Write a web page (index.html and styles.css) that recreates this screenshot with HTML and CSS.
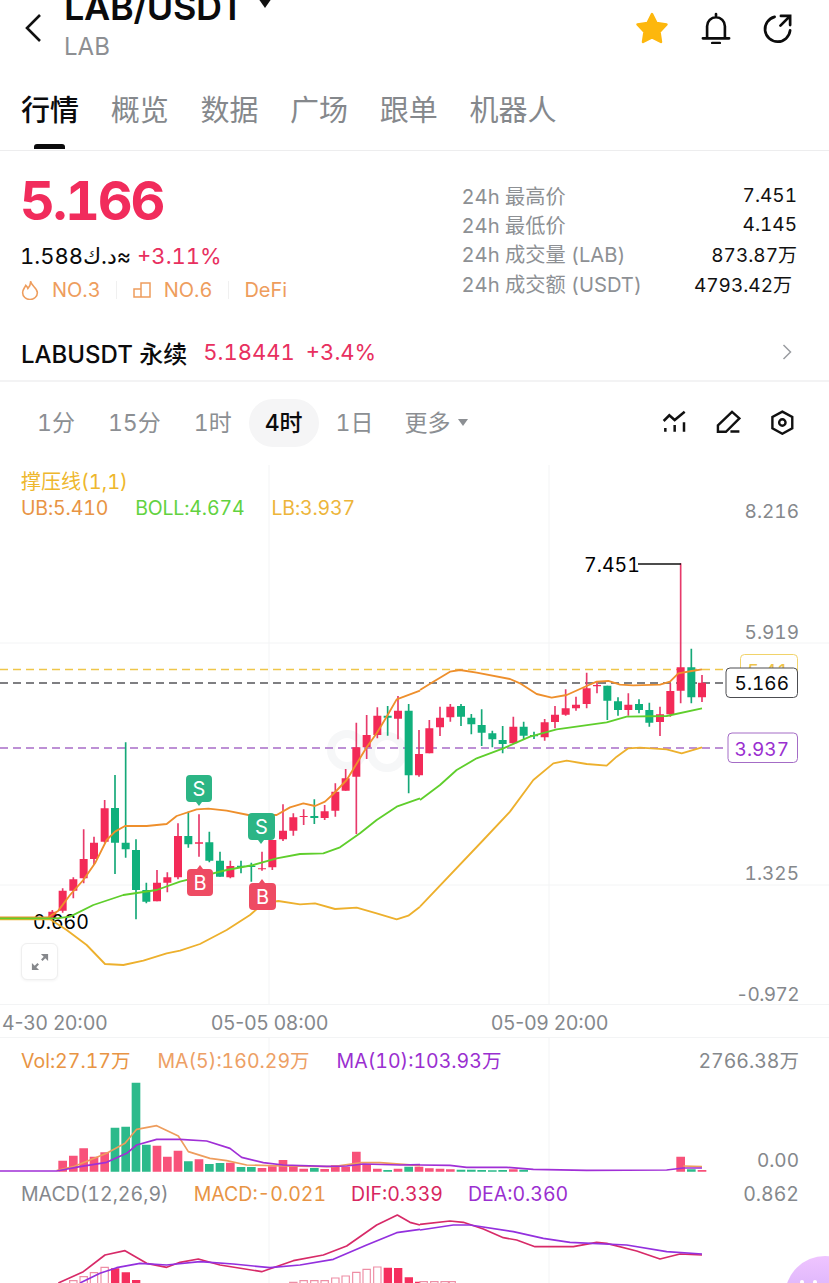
FILE: index.html
```html
<!DOCTYPE html>
<html lang="zh">
<head>
<meta charset="utf-8">
<title>LAB/USDT</title>
<link rel="stylesheet" href="styles.css">
</head>
<body>
<div class="page">
  <header class="header">
    <svg class="back" viewBox="0 0 20 32"><path d="M17 3 4 16l13 13"/></svg>
    <div class="pair">
      <div class="pair-name">LAB/USDT<span class="pair-caret"></span></div>
      <div class="pair-sub">LAB</div>
    </div>
    <div class="header-icons">
      <svg class="ic-star" viewBox="0 0 34 32"><path d="M17 2 21.5 11 31.5 12.5 24.5 20 26 30 17 25.5 8 30 9.5 20 2.5 12.5 12.5 11z"/></svg>
      <svg class="ic-line ic-bell" viewBox="0 0 32 34"><path d="M6.5 28V15a9.500 9.500 0 0 1 19 0v13M2 28h28M12 33h8M16 2v3.500"/></svg>
      <svg class="ic-line ic-share" viewBox="0 0 32 32"><path d="M12 4a13 13 0 1 0 16 14M18 13l9-9M18.500 3H28v9.500"/></svg>
    </div>
  </header>

  <nav class="tabs">
    <span class="tab tab-active">行情</span>
    <span class="tab">概览</span>
    <span class="tab">数据</span>
    <span class="tab">广场</span>
    <span class="tab">跟单</span>
    <span class="tab">机器人</span>
  </nav>

  <section class="summary">
    <div class="summary-left">
      <div class="price">5.166</div>
      <div class="fiat-row">
        <span class="fiat" dir="rtl">≈د.ك1.588</span>
        <span class="up">+3.11%</span>
      </div>
      <div class="tags">
        <span class="tag"><svg class="tag-ic tag-flame" viewBox="0 0 16 19"><path d="M8.500 1c.5 4.500 6.500 6.500 6.500 11a7 6.500 0 0 1-14 0c0-3 2-4.500 3-7 1 .8 1.600 1.800 2 3 1.800-2 2.800-4.500 2.500-7z"/></svg>NO.3</span>
        <i class="tag-sep"></i>
        <span class="tag"><svg class="tag-ic tag-build" viewBox="0 0 18 16"><path d="M1 7h7v8H1zM8 15V1h9v14z"/></svg>NO.6</span>
        <i class="tag-sep"></i>
        <span class="tag">DeFi</span>
      </div>
    </div>
    <dl class="stats">
      <div class="stat"><dt>24h 最高价</dt><dd>7.451</dd></div>
      <div class="stat"><dt>24h 最低价</dt><dd>4.145</dd></div>
      <div class="stat"><dt>24h 成交量 (LAB)</dt><dd>873.87万</dd></div>
      <div class="stat stat-last"><dt>24h 成交额 (USDT)</dt><dd>4793.42万</dd></div>
    </dl>
  </section>

  <section class="perp">
    <span class="perp-name">LABUSDT 永续</span>
    <span class="up perp-price">5.18441</span>
    <span class="up perp-change">+3.4%</span>
    <svg class="perp-chev" viewBox="0 0 10 18"><path d="M1.500 2 8.500 9l-7 7"/></svg>
  </section>

  <section class="timebar">
    <span class="time">1分</span>
    <span class="time">15分</span>
    <span class="time">1时</span>
    <span class="time time-active">4时</span>
    <span class="time">1日</span>
    <span class="time time-more">更多<i class="more-caret"></i></span>
    <div class="tools">
      <svg class="tool" viewBox="30 43 75 75"><path d="M35 76 52 59 68 73 98 48M40 97v11M68 88v20M96 80v28"/></svg>
      <svg class="tool" viewBox="195 40 78 78"><path d="M201 88 245 46 268 66 226 108H201zM240 107h28"/></svg>
      <svg class="tool" viewBox="358 41 75 78"><path d="M395 46 426 63V98L395 115 364 98V63z"/><circle cx="395" cy="80" r="10"/></svg>
    </div>
  </section>

  <section class="pane pane-main">
    <svg class="canvas" viewBox="0 465 829 540">
      <path class="grid" d="M269 465V1005M549 465V1005M0 643H829M0 885H829M0 1004.500H829"/>
      <g class="watermark"><circle cx="347" cy="750" r="16"/><circle cx="387" cy="752" r="16"/></g>
      <path class="dash dash-gold" d="M0 669.500H726"/>
      <path class="dash dash-dark" d="M0 683H726"/>
      <path class="dash dash-purple" d="M0 748H728"/>

      <g transform="translate(0 690) scale(.33333)">
        <path class="wick-r" d="M157 660V690M188 595V668M220 562V625M251 418V580M282 440V525M314 330V458M471 540V634M502 547V607M534 400V568M597 373V500M691 512V565M786 485V542M817 450V540M849 343V453M880 370V437M911 358V405M974 345V390M1006 280V380M1037 237V302M1069 98V432M1100 75V207M1132 52V145M1194 18V148M1257 120V260"/>
        <path class="wick-g" d="M345 255V552M377 157V503M408 448V688M439 578V640M565 365V473M628 425V517M660 485V560M723 512V550M754 518V575M943 328V402M1163 48V137M1226 42V310"/>
        <path class="body-r" d="M145 665h24v20h-24zM176 602h24v60h-24zM208 568h24v34h-24zM239 507h24v58h-24zM270 458h24v49h-24zM302 355h24v100h-24zM459 578h24v56h-24zM490 562h24v16h-24zM522 438h24v124h-24zM585 457h24v4h-24zM679 528h24v34h-24zM774 535h24v3h-24zM805 450h24v82h-24zM837 422h24v26h-24zM868 382h24v40h-24zM899 378h24v3h-24zM962 364h24v20h-24zM994 305h24v57h-24zM1025 265h24v37h-24zM1057 172h24v88h-24zM1088 135h24v37h-24zM1120 77h24v58h-24zM1182 62h24v24h-24zM1245 192h24v64h-24z"/>
        <path class="body-g" d="M333 354h24v104h-24zM365 458h24v20h-24zM396 480h24v120h-24zM427 600h24v35h-24zM553 438h24v25h-24zM616 457h24v55h-24zM648 512h24v48h-24zM711 527h24v4h-24zM742 527h24v4h-24zM931 378h24v6h-24zM1151 77h24v6h-24zM1214 62h24v194h-24z"/>
      </g>
      <g transform="translate(420 540) scale(.33333)">
        <path class="wick-r" d="M28 540V640M60 500V588M91 492V545M280 530V612M374 537V602M405 498V565M437 448V527M468 470V512M500 398V505M531 425V460M625 460V527M720 500V588M751 430V530M782 70V490M846 405V486"/>
        <path class="wick-g" d="M123 492V558M154 522V583M185 508V618M217 572V622M248 558V640M311 545V597M342 575V597M562 437V540M594 472V527M657 478V520M688 488V560M814 326V490"/>
        <path class="body-r" d="M16 565h24v75h-24zM48 533h24v29h-24zM79 500h24v32h-24zM268 560h24v50h-24zM362 547h24v45h-24zM393 524h24v22h-24zM425 505h24v19h-24zM456 494h24v11h-24zM488 445h24v47h-24zM519 435h24v4h-24zM613 494h24v16h-24zM708 523h24v23h-24zM739 453h24v70h-24zM770 382h24v70h-24zM834 428h24v44h-24z"/>
        <path class="body-g" d="M111 498h24v32h-24zM142 533h24v20h-24zM173 555h24v23h-24zM205 580h24v18h-24zM236 600h24v12h-24zM299 560h24v27h-24zM330 585h24v4h-24zM550 437h24v45h-24zM582 484h24v26h-24zM645 492h24v18h-24zM676 510h24v38h-24zM802 382h24v90h-24z"/>
      </g>

      <text class="mark-price" x="33" y="929">0.660</text>

      <g transform="translate(0 690) scale(.33333)">
        <path class="band band-low" d="M0 688H150L200 720 260 765 315 822 370 825 430 812 500 790 540 782 600 762 680 720 750 675 790 640 835 633 900 643 945 640 1005 657 1070 653 1130 670 1190 688 1225 677 1260 650"/>
        <path class="band band-up" d="M0 682H145L175 662 210 615 250 570 285 520 320 450 345 425 375 408 440 408 500 402 530 378 590 358 625 356 680 362 745 375 830 375 870 352 910 340 945 348 975 335 1000 312 1040 270 1100 172 1130 130 1160 80 1190 28 1260 2"/>
        <path class="band band-mid" d="M0 685H170L210 680 280 645 370 615 470 600 540 575 600 560 680 540 760 525 830 505 900 492 970 490 1020 472 1080 430 1130 390 1190 350 1260 325"/>
      </g>
      <g transform="translate(420 540) scale(.33333)">
        <path class="band band-low" d="M0 1100 190 900 270 815 340 720 400 670 440 662 500 672 560 677 590 650 625 625 660 623 740 628 785 640 846 622"/>
        <path class="band band-mid" d="M0 780 60 735 110 690 170 655 250 625 330 590 410 568 560 547 620 530 740 528 846 505"/>
        <path class="band band-up" d="M0 450 40 425 90 395 120 390 170 398 270 417 300 430 350 462 395 473 440 465 500 438 530 425 565 423 600 434 640 436 720 434 750 425 775 400 815 393 846 388"/>
      </g>

      <path class="leader" d="M638 564H681"/>
      <text class="mark-price" x="584" y="572">7.451</text>

      <g class="signal-s" transform="translate(186 775)">
        <path d="M4 0h18a4 4 0 0 1 4 4v19a4 4 0 0 1-4 4h-6l-3 4-3-4H4a4 4 0 0 1-4-4V4a4 4 0 0 1 4-4z"/>
        <text x="13" y="21">S</text>
      </g>
      <g class="signal-s" transform="translate(248 813)">
        <path d="M4 0h19a4 4 0 0 1 4 4v19a4 4 0 0 1-4 4h-7l-3 4-3-4H4a4 4 0 0 1-4-4V4a4 4 0 0 1 4-4z"/>
        <text x="13.500" y="21">S</text>
      </g>
      <g class="signal-b" transform="translate(187 866)">
        <path d="M4 3h6l3-4 3 4h6a4 4 0 0 1 4 4v19a4 4 0 0 1-4 4H4a4 4 0 0 1-4-4V7a4 4 0 0 1 4-4z"/>
        <text x="13" y="24">B</text>
      </g>
      <g class="signal-b" transform="translate(249 880)">
        <path d="M4 3h6l3-4 3 4h7a4 4 0 0 1 4 4v19a4 4 0 0 1-4 4H4a4 4 0 0 1-4-4V7a4 4 0 0 1 4-4z"/>
        <text x="13.500" y="24">B</text>
      </g>

      <text class="axis" x="799" y="517.500">8.216</text>
      <text class="axis" x="799" y="638.500">5.919</text>
      <text class="axis" x="799" y="880">1.325</text>
      <text class="axis axis-neg" x="799" y="1000.500">-0.972</text>

      <rect class="tag-gold" x="740.500" y="654.500" width="57" height="30" rx="4"/>
      <text class="tag-gold-text" x="789" y="678">5.41</text>
      <rect class="tag-dark" x="726" y="668" width="71.500" height="29.500" rx="4"/>
      <text class="tag-dark-text" x="789" y="690">5.166</text>
      <rect class="tag-purple" x="728" y="733" width="69.500" height="29.500" rx="4"/>
      <text class="tag-purple-text" x="789" y="755.500">3.937</text>
    </svg>

    <div class="main-legend">
      <div class="legend-title">撑压线(1,1)</div>
      <div class="legend legend-boll">
        <span class="c-orange">UB:5.410</span>
        <span class="c-green">BOLL:4.674</span>
        <span class="c-gold">LB:3.937</span>
      </div>
    </div>
    <button class="expand" type="button" aria-label="expand">
      <svg viewBox="0 0 20 20"><path d="M2 18 8 12M18 2 12 8"/><path class="expand-head" d="M1 11v8h8zM19 9V1h-8z"/></svg>
    </button>
  </section>

  <div class="dates">
    <span>4-30 20:00</span>
    <span>05-05 08:00</span>
    <span>05-09 20:00</span>
  </div>

  <section class="pane pane-vol">
    <svg class="canvas" viewBox="0 1037 829 138">
      <path class="grid" d="M269 1037V1175M549 1037V1175M0 1037.500H829"/>
      <g transform="translate(0 1040) scale(.33333)">
        <path class="vol-r" d="M175 362h26v33h-26zM207 347h26v48h-26zM238 325h26v70h-26zM269 350h26v45h-26zM301 337h26v58h-26zM458 317h26v78h-26zM489 350h26v45h-26zM521 332h26v63h-26zM584 358h26v37h-26zM678 368h26v27h-26zM773 384h26v11h-26zM804 379h26v16h-26zM836 360h26v35h-26zM867 376h26v19h-26zM898 386h26v9h-26zM961 387h26v8h-26zM993 376h26v19h-26zM1024 380h26v15h-26zM1056 335h26v60h-26zM1087 372h26v23h-26zM1119 386h26v9h-26zM1181 386h26v9h-26zM1244 380h26v15h-26z"/>
        <path class="vol-g" d="M332 263h26v132h-26zM364 260h26v135h-26zM395 128h26v267h-26zM426 314h26v81h-26zM552 364h26v31h-26zM615 372h26v23h-26zM647 369h26v26h-26zM710 381h26v14h-26zM741 381h26v14h-26zM930 384h26v11h-26zM1150 390h26v5h-26zM1213 380h26v15h-26z"/>
        <path class="line-ma5" d="M170 392 220 380 270 360 320 340 375 310 410 268 470 257 535 288 565 335 630 355 680 362 740 375 850 378 1000 380 1085 368 1140 368 1260 377"/>
        <path class="line-ma10" d="M0 393H170L240 380 320 367 380 340 410 315 470 298 540 298 620 303 690 325 725 352 790 368 850 375 980 379 1040 378 1090 372 1200 375 1260 374"/>
      </g>
      <g transform="translate(420 1040) scale(.33333)">
        <path class="vol-r" d="M15 385h26v10h-26zM47 386h26v9h-26zM78 388h26v7h-26zM267 388h26v7h-26zM769 350h26v45h-26zM833 390h26v5h-26z"/>
        <path class="vol-g" d="M110 389h26v6h-26zM141 389h26v6h-26zM172 390h26v5h-26zM204 391h26v4h-26zM235 390h26v5h-26zM298 389h26v6h-26zM801 388h26v7h-26z"/>
        <path class="line-ma5" d="M790 378 846 380"/>
        <path class="line-ma10" d="M0 375 90 376 140 382 260 382 340 388 500 391 740 390 790 384 846 384"/>
      </g>
      <text class="axis" x="799" y="1167">0.00</text>
    </svg>
    <div class="legend legend-vol">
      <span class="c-orange">Vol:27.17万</span>
      <span class="c-peach">MA(5):160.29万</span>
      <span class="c-purple">MA(10):103.93万</span>
      <span class="legend-end">2766.38万</span>
    </div>
  </section>

  <section class="pane pane-macd">
    <svg class="canvas" viewBox="0 1175 829 108">
      <path class="grid" d="M269 1175V1283M549 1175V1283"/>
      <g transform="translate(0 1040) scale(.33333)">
        <path class="hist-hollow" d="M209 722h22v30h-22zM240 710h22v40h-22zM271 698h22v50h-22zM303 682h22v70h-22zM869 727h22v30h-22zM900 722h22v30h-22zM932 722h22v30h-22zM963 722h22v30h-22zM995 714h22v40h-22zM1026 708h22v40h-22zM1058 697h22v50h-22zM1089 688h22v60h-22zM1121 681h22v70h-22z"/>
        <path class="hist-solid" d="M333 685h25v60h-25zM365 697h25v50h-25zM396 720h25v30h-25zM1151 683h25v60h-25zM1182 684h25v60h-25zM1214 712h25v40h-25zM1245 725h25v30h-25z"/>
        <path class="line-dif" d="M175 729 250 695 315 645 375 632 440 670 500 682 540 667 595 657 660 675 785 695 880 662 970 645 1040 618 1130 555 1192 525 1230 547 1260 555"/>
        <path class="line-dea" d="M240 729 300 700 350 683 420 670 500 675 600 665 700 672 810 683 900 675 1000 658 1100 615 1190 578 1260 568"/>
      </g>
      <g transform="translate(420 1040) scale(.33333)">
        <path class="hist-hollow" d="M0 725h22v30H0zM32 725h22v30H32zM63 725h22v30H63zM88 725h18v30H88z"/>
        <path class="line-dif" d="M0 553 90 543 130 547 190 567 250 593 290 600 345 620 460 620 530 607 560 610 650 633 720 657 780 642 846 645"/>
        <path class="line-dea" d="M0 570 100 555 150 555 280 575 370 595 450 607 620 615 740 635 846 642"/>
      </g>
    </svg>
    <div class="legend legend-macd">
      <span class="c-grey">MACD(12,26,9)</span>
      <span class="c-orange">MACD:-0.021</span>
      <span class="c-crimson">DIF:0.339</span>
      <span class="c-purple">DEA:0.360</span>
      <span class="legend-end">0.862</span>
    </div>
    <div class="bubble"><i></i><i></i></div>
  </section>
</div>
</body>
</html>
```
FILE: styles.css
```css
* { box-sizing: border-box; }
html, body { margin: 0; padding: 0; background: #fff; }
body {
  width: 829px;
  height: 1283px;
  overflow: hidden;
  font-family: Inter, "Noto Sans CJK SC", sans-serif;
  font-variant-numeric: tabular-nums;
  color: #0b0b0c;
}
.page { width: 829px; height: 1283px; overflow: hidden; position: relative; }

/* header */
.header { display: flex; height: 90px; padding-left: 23px; position: relative; }
.back { width: 20px; height: 32px; margin-top: 12px; fill: none; stroke: #111; stroke-width: 2.600; }
.pair { margin-left: 21px; margin-top: -18px; }
.pair-name { font-size: 36px; line-height: 50px; font-weight: 600; letter-spacing: -.3px; display: flex; align-items: center; }
.pair-caret {
  width: 0; height: 0; margin-left: 14px; margin-top: -8px;
  border-left: 7px solid transparent; border-right: 7px solid transparent; border-top: 10px solid #111;
}
.pair-sub { font-size: 24px; line-height: 30px; margin-top: 0; color: #8d8f93; }
.header-icons { margin-left: auto; display: flex; align-items: flex-start; padding-right: 35px; }
.ic-star { width: 34px; height: 32px; margin-top: 12px; fill: #fdb70d; stroke: #fdb70d; stroke-width: 2.500; stroke-linejoin: round; }
.ic-line { fill: none; stroke: #0c0c0c; stroke-width: 2.800; stroke-linecap: round; }
.ic-bell { width: 30px; height: 32px; margin-top: 12px; margin-left: 32px; }
.ic-share { width: 31px; height: 31px; margin-top: 13px; margin-left: 32px; }

/* tabs */
.tabs { display: flex; gap: 31.700px; height: 61px; padding: 1px 0 0 21px; border-bottom: 1px solid #ededee; align-items: flex-start; }
.tab { font-size: 29px; line-height: 40px; color: #85888c; position: relative; }
.tab-active { color: #0b0b0c; font-weight: 500; }
.tab-active::after {
  content: ""; position: absolute; left: 13px; top: 53px; width: 31px; height: 5px; border-radius: 3px 3px 0 0; background: #0b0b0c;
}

/* summary */
.summary { display: flex; justify-content: space-between; height: 179px; padding-left: 20px; padding-right: 32px; }
.summary-left { display: flex; flex-direction: column; }
.price { font-size: 54px; line-height: 60px; margin-top: 20px; font-weight: 700; color: #f12c5c; letter-spacing: -2.200px; }
.fiat-row { display: flex; gap: 6px; margin-top: 11px; font-size: 22px; line-height: 28px; }
.fiat { display: inline-block; font-family: Inter, "DejaVu Sans", sans-serif; }
.up { color: #e8305f; }
.tags { display: flex; align-items: center; gap: 15.500px; margin-top: 6px; margin-left: 1px; font-size: 20px; line-height: 28px; color: #ee9d5d; }
.tag { display: flex; align-items: center; gap: 13px; }
.tag-ic { fill: none; stroke: #ee9d5d; stroke-width: 1.500; }
.tag-flame { width: 18px; height: 20px; }
.tag-build { width: 18px; height: 16px; }
.tag-sep { width: 1px; height: 18px; background: #f0f0f0; }
.stats { margin: 29.500px 0 0; width: 335.500px; }
.stat { display: flex; justify-content: space-between; height: 29.400px; align-items: center; font-size: 20.200px; }
.stat dt { color: #8d9094; }
.stat dd { margin: 0; color: #111; font-size: 19px; }
.stat-last { padding-right: 5px; }

.perp { display: flex; align-items: center; height: 52px; padding: 0 37px 6px 21px; border-bottom: 2px solid #f3f3f4; font-size: 22px; }
.perp-name { font-size: 24px; font-weight: 500; }
.perp-price { margin-left: 16px; }
.perp-change { margin-left: 11px; }
.perp-chev { width: 10px; height: 18px; margin-left: auto; fill: none; stroke: #9a9da1; stroke-width: 1.500; }

/* timeframes */
.timebar { display: flex; align-items: center; gap: 1px; height: 83px; padding: 0 34px 2px 21px; font-size: 23px; color: #8c8f93; }
.time { height: 48px; line-height: 48px; padding: 0 16px; border-radius: 24px; display: flex; align-items: center; }
.time-active { background: #f5f5f6; color: #0b0b0c; font-weight: 500; }
.time-more { margin-left: -2px; }
.more-caret { width: 0; height: 0; margin-left: 7px; border-left: 5.500px solid transparent; border-right: 5.500px solid transparent; border-top: 7px solid #8c8f93; }
.tools { margin-left: auto; display: flex; gap: 29px; align-items: center; }
.tool { width: 25px; height: 25px; fill: none; stroke: #111; stroke-width: 7.500; }

/* chart panes */
.pane { position: relative; overflow: hidden; }
.pane-main { height: 540px; padding-top: 4px; }
.pane-vol { height: 138px; }
.pane-macd { height: 108px; overflow: visible; }
.canvas { position: absolute; left: 0; top: 0; width: 829px; height: 100%; display: block; }
.canvas text { font-family: Inter, "Noto Sans CJK SC", sans-serif; }
.main-legend { position: relative; padding-left: 21px; }
.legend-title { font-size: 20px; line-height: 26px; color: #eeb72d; }
.legend { display: flex; gap: 27px; position: relative; font-size: 19.500px; line-height: 26px; padding: 0 30px 0 21px; }
.legend-boll { padding-left: 0; line-height: 27px; letter-spacing: -.15px; }
.legend-vol { padding-top: 11px; }
.legend-macd { padding-top: 6px; gap: 25px; }
.legend-end { margin-left: auto; color: #85888c; }
.c-orange { color: #e89444; }
.c-green { color: #62d23f; }
.c-gold { color: #edb53a; }
.c-peach { color: #eda065; }
.c-purple { color: #9a2fd0; }
.c-grey { color: #84878c; }
.c-crimson { color: #d8265f; }

.grid { fill: none; stroke: #f3f4f5; stroke-width: 1; }
.watermark circle { fill: none; stroke: #f6f7f8; stroke-width: 8; }
.dash { fill: none; stroke-width: 1.300; stroke-dasharray: 8 5; }
.dash-gold { stroke: #efc64a; }
.dash-dark { stroke: #55565a; }
.dash-purple { stroke: #a86cc8; }
.wick-r { fill: none; stroke: #e73a6b; stroke-width: 5; }
.wick-g { fill: none; stroke: #15a878; stroke-width: 5; }
.body-r { fill: #f32a58; }
.body-g { fill: #10b07c; }
.band { fill: none; stroke-width: 5.500; stroke-linejoin: round; }
.band-up { stroke: #ee8f2c; }
.band-mid { stroke: #5fce2c; }
.band-low { stroke: #edb02d; }
.leader { fill: none; stroke: #111; stroke-width: 1.400; }
.mark-price { font-size: 19.500px; fill: #000; }
.signal-s path { fill: #2cb585; }
.signal-b path { fill: #ee4b63; }
.signal-s text, .signal-b text { font-size: 20px; fill: #fff; text-anchor: middle; }
.axis { font-size: 19px; fill: #85888c; text-anchor: end; }
.axis-neg { letter-spacing: -.6px; }
.tag-gold { fill: #fff; stroke: #f1d36a; }
.tag-gold-text { font-size: 19px; fill: #edc34a; text-anchor: end; }
.tag-dark { fill: #fff; stroke: #4c4d51; }
.tag-dark-text { font-size: 19px; fill: #0b0b0c; text-anchor: end; }
.tag-purple { fill: #fff; stroke: #a46cc6; }
.tag-purple-text { font-size: 19px; fill: #9a2fd0; text-anchor: end; }

.expand {
  position: absolute; left: 21px; top: 478px; width: 37px; height: 37px; padding: 9px;
  border: 1px solid #efefef; border-radius: 6px; background: #fff; box-shadow: 0 1px 3px rgba(0,0,0,.05);
}
.expand svg { display: block; width: 18px; height: 18px; fill: none; stroke: #86888c; stroke-width: 2.400; }
.expand-head { fill: #86888c; stroke: none; }

.dates { display: grid; grid-template-columns: 209px 280px 1fr; height: 32px; padding-left: 2px; padding-top: 3px; font-size: 19.500px; line-height: 30px; color: #85888c; font-variant-numeric: normal; }

.vol-r { fill: #f8527a; }
.vol-g { fill: #2cba8b; }
.line-ma5 { fill: none; stroke: #ee9d5d; stroke-width: 5; stroke-linejoin: round; }
.line-ma10 { fill: none; stroke: #a02fd6; stroke-width: 5; stroke-linejoin: round; }
.hist-hollow { fill: #fff; stroke: #ee8ea5; stroke-width: 3.500; }
.hist-solid { fill: #f52f5e; }
.line-dif { fill: none; stroke: #d72a68; stroke-width: 5; stroke-linejoin: round; }
.line-dea { fill: none; stroke: #9330de; stroke-width: 5; stroke-linejoin: round; }

.bubble {
  position: absolute; left: 785px; top: 81px; width: 80px; height: 80px; border-radius: 50%;
  background: linear-gradient(180deg, #efc4ff, #c5a3f6); display: flex; gap: 9px; padding: 24px 0 0 15px;
}
.bubble i { width: 4px; height: 4px; border-radius: 50%; background: #fff; }
```
